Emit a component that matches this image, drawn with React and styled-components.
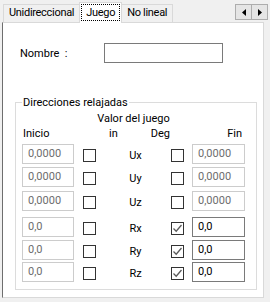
import React from 'react'
import styled, { createGlobalStyle } from 'styled-components'

const Global = createGlobalStyle`
  html, body { margin: 0; padding: 0; background: #f0f0f0; }
  * { box-sizing: border-box; }
`

const COLS = '52px 22px 75px 13px 61px'

const Window = styled.div`
  width: 270px;
  height: 302px;
  background: #f0f0f0;
  display: flex;
  flex-direction: column;
  font-family: Roboto, "Liberation Sans", sans-serif;
  font-size: 11px;
  color: #000;
  overflow: hidden;
`

const TabBar = styled.div`
  height: 22px;
  display: flex;
  align-items: flex-end;
  padding-left: 3px;
  position: relative;
  z-index: 1;
  letter-spacing: -0.3px;
`

const Tab = styled.div`
  height: ${p => (p.$active ? '21px' : '18px')};
  margin-bottom: ${p => (p.$active ? '-1px' : '0')};
  margin-left: ${p => (p.$first ? '0' : '-1px')};
  padding: ${p => (p.$active ? '1px 1px 0' : '0 5px')};
  border: 1px solid #d9d9d9;
  border-bottom: none;
  background: ${p => (p.$active ? '#fff' : '#f0f0f0')};
  line-height: 16px;
  white-space: nowrap;
`

const Focus = styled.span`
  display: block;
  border: 1px dotted #000;
  padding: 0 4px;
  line-height: 15px;
`

const Scroller = styled.div`
  margin-left: auto;
  margin-right: 2px;
  align-self: flex-start;
  margin-top: 4px;
  display: flex;
`

const ScrollBtn = styled.div`
  width: 17px;
  height: 16px;
  border: 1px solid #adadad;
  background: #e5e5e5;
  margin-left: ${p => (p.$second ? '-1px' : '0')};
  display: flex;
  align-items: center;
  justify-content: center;
`

const Panel = styled.div`
  flex: 1;
  margin: 0 6px 4px 2px;
  background: #fff;
  border: 1px solid #d9d9d9;
  border-left: 1px solid #6e6e6e;
  display: flex;
  flex-direction: column;
`

const NameRow = styled.div`
  display: flex;
  align-items: center;
  margin: 20px 0 0 17px;
  height: 20px;
`

const NameLabel = styled.span`
  width: 84px;
`

const TextBox = styled.div`
  width: ${p => p.$w || 53}px;
  height: 20px;
  border: 1px solid ${p => (p.$on ? '#7a7a7a' : '#cccccc')};
  background: #fff;
  color: ${p => (p.$on ? '#000' : '#6d6d6d')};
  padding-left: 5px;
  line-height: 18px;
  white-space: nowrap;
`

const Group = styled.fieldset`
  margin: 32px 6px 0 12px;
  padding: 1px 0 7px 6px;
  border: 1px solid #dcdcdc;
  min-width: 0;
`

const Legend = styled.legend`
  margin-left: 0;
  padding: 0 1px;
  line-height: 15px;
`

const Grid = styled.div`
  display: grid;
  grid-template-columns: ${COLS};
  align-items: center;
  margin-top: ${p => p.$mt || 0}px;
`

const HeadLine = styled.div`
  grid-column: ${p => p.$col};
  line-height: 15px;
  height: 15px;
  white-space: nowrap;
  text-align: ${p => p.$align || 'left'};
  padding-left: ${p => p.$pl || 0}px;
  padding-right: ${p => p.$pr || 0}px;
  display: ${p => (p.$split ? 'flex' : 'block')};
  justify-content: space-between;
`

const Check = styled.div`
  width: 13px;
  height: 13px;
  border: 1px solid #333;
  background: #fff;
  justify-self: end;
  margin-top: 2px;
  display: flex;
  align-items: center;
  justify-content: center;
`

const Axis = styled.div`
  text-align: center;
  padding-left: 4px;
  margin-top: 2px;
`

const Cell = styled.div`
  justify-self: ${p => (p.$end ? 'end' : 'start')};
`

const Arrow = ({ dir }) => (
  <svg width="4" height="7" viewBox="0 0 4 7">
    <path d={dir === 'left' ? 'M4 0 L0 3.5 L4 7 Z' : 'M0 0 L4 3.5 L0 7 Z'} fill="#000" />
  </svg>
)

const CheckBox = ({ checked }) => (
  <Check>
    {checked && (
      <svg width="11" height="11" viewBox="0 0 11 11">
        <path d="M1.5 5.5 L4.2 8.2 L9.5 2" fill="none" stroke="#5a5a5a" strokeWidth="1.3" />
      </svg>
    )}
  </Check>
)

const rows = [
  { axis: 'Ux', ini: '0,0000', fin: '0,0000', deg: false, on: false, mt: 3 },
  { axis: 'Uy', ini: '0,0000', fin: '0,0000', deg: false, on: false, mt: 3 },
  { axis: 'Uz', ini: '0,0000', fin: '0,0000', deg: false, on: false, mt: 4 },
  { axis: 'Rx', ini: '0,0', fin: '0,0', deg: true, on: true, mt: 6 },
  { axis: 'Ry', ini: '0,0', fin: '0,0', deg: true, on: true, mt: 3 },
  { axis: 'Rz', ini: '0,0', fin: '0,0', deg: true, on: true, mt: 2 },
]

export default function App() {
  return (
    <>
      <Global />
      <Window>
        <TabBar>
          <Tab $first>Unidireccional</Tab>
          <Tab $active><Focus>Juego</Focus></Tab>
          <Tab>No lineal</Tab>
          <Scroller>
            <ScrollBtn><Arrow dir="left" /></ScrollBtn>
            <ScrollBtn $second><Arrow dir="right" /></ScrollBtn>
          </Scroller>
        </TabBar>
        <Panel>
          <NameRow>
            <NameLabel>Nombre&nbsp; :</NameLabel>
            <TextBox $on $w={119} />
          </NameRow>
          <Group>
            <Legend>Direcciones relajadas</Legend>
            <Grid>
              <HeadLine $col="3" $align="center">Valor del juego</HeadLine>
            </Grid>
            <Grid>
              <HeadLine $col="1" $pl={1}>Inicio</HeadLine>
              <HeadLine $col="3" $pl={13} $pr={1} $split><span>in</span><span>Deg</span></HeadLine>
              <HeadLine $col="5" $align="right" $pr={3}>Fin</HeadLine>
            </Grid>
            {rows.map(r => (
              <Grid key={r.axis} $mt={r.mt}>
                <Cell><TextBox $w={52}>{r.ini}</TextBox></Cell>
                <CheckBox />
                <Axis>{r.axis}</Axis>
                <CheckBox checked={r.deg} />
                <Cell $end><TextBox $on={r.on}>{r.fin}</TextBox></Cell>
              </Grid>
            ))}
          </Group>
        </Panel>
      </Window>
    </>
  )
}
